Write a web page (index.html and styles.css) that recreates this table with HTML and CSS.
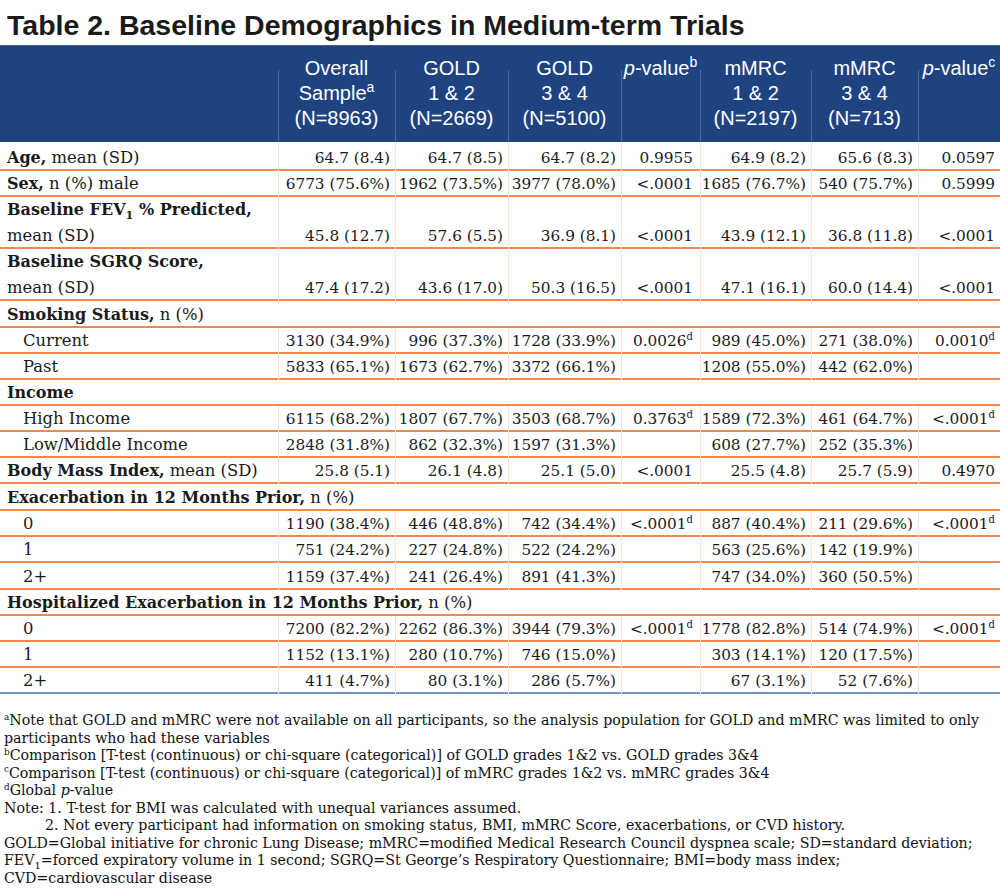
FILE: index.html
```html
<!DOCTYPE html>
<html lang="en">
<head>
<meta charset="utf-8">
<title>Table 2. Baseline Demographics in Medium-term Trials</title>
<link rel="stylesheet" href="styles.css">
</head>
<body>
<h1 class="title">Table 2. Baseline Demographics in Medium-term Trials</h1>
<table class="demo">
  <colgroup>
    <col class="c-label">
    <col class="c-overall">
    <col class="c-g12">
    <col class="c-g34">
    <col class="c-pb">
    <col class="c-m12">
    <col class="c-m34">
    <col class="c-pc">
  </colgroup>
  <thead>
    <tr>
      <th class="h-blank"></th>
      <th>Overall<br>Sample<sup>a</sup><br>(N=8963)</th>
      <th>GOLD<br>1 &amp; 2<br>(N=2669)</th>
      <th>GOLD<br>3 &amp; 4<br>(N=5100)</th>
      <th><i>p</i>-value<sup>b</sup></th>
      <th>mMRC<br>1 &amp; 2<br>(N=2197)</th>
      <th>mMRC<br>3 &amp; 4<br>(N=713)</th>
      <th><i>p</i>-value<sup>c</sup></th>
    </tr>
  </thead>
  <tbody>
    <tr class="first">
      <td class="lab"><b>Age,</b> mean (SD)</td>
      <td>64.7 (8.4)</td><td>64.7 (8.5)</td><td>64.7 (8.2)</td><td class="pb">0.9955</td><td>64.9 (8.2)</td><td>65.6 (8.3)</td><td class="pc">0.0597</td>
    </tr>
    <tr>
      <td class="lab"><b>Sex,</b> n (%) male</td>
      <td>6773 (75.6%)</td><td>1962 (73.5%)</td><td>3977 (78.0%)</td><td class="pb">&lt;.0001</td><td>1685 (76.7%)</td><td>540 (75.7%)</td><td class="pc">0.5999</td>
    </tr>
    <tr>
      <td class="lab"><b>Baseline FEV<sub>1</sub> % Predicted,</b><br>mean (SD)</td>
      <td>45.8 (12.7)</td><td>57.6 (5.5)</td><td>36.9 (8.1)</td><td class="pb">&lt;.0001</td><td>43.9 (12.1)</td><td>36.8 (11.8)</td><td class="pc">&lt;.0001</td>
    </tr>
    <tr>
      <td class="lab"><b>Baseline SGRQ Score,</b><br>mean (SD)</td>
      <td>47.4 (17.2)</td><td>43.6 (17.0)</td><td>50.3 (16.5)</td><td class="pb">&lt;.0001</td><td>47.1 (16.1)</td><td>60.0 (14.4)</td><td class="pc">&lt;.0001</td>
    </tr>
    <tr class="section tall">
      <td class="lab" colspan="8"><b>Smoking Status,</b> n (%)</td>
    </tr>
    <tr>
      <td class="lab sub">Current</td>
      <td>3130 (34.9%)</td><td>996 (37.3%)</td><td>1728 (33.9%)</td><td class="pb">0.0026<sup>d</sup></td><td>989 (45.0%)</td><td>271 (38.0%)</td><td class="pc">0.0010<sup>d</sup></td>
    </tr>
    <tr>
      <td class="lab sub">Past</td>
      <td>5833 (65.1%)</td><td>1673 (62.7%)</td><td>3372 (66.1%)</td><td class="pb"></td><td>1208 (55.0%)</td><td>442 (62.0%)</td><td class="pc"></td>
    </tr>
    <tr class="section">
      <td class="lab" colspan="8"><b>Income</b></td>
    </tr>
    <tr>
      <td class="lab sub">High Income</td>
      <td>6115 (68.2%)</td><td>1807 (67.7%)</td><td>3503 (68.7%)</td><td class="pb">0.3763<sup>d</sup></td><td>1589 (72.3%)</td><td>461 (64.7%)</td><td class="pc">&lt;.0001<sup>d</sup></td>
    </tr>
    <tr>
      <td class="lab sub">Low/Middle Income</td>
      <td>2848 (31.8%)</td><td>862 (32.3%)</td><td>1597 (31.3%)</td><td class="pb"></td><td>608 (27.7%)</td><td>252 (35.3%)</td><td class="pc"></td>
    </tr>
    <tr>
      <td class="lab"><b>Body Mass Index,</b> mean (SD)</td>
      <td>25.8 (5.1)</td><td>26.1 (4.8)</td><td>25.1 (5.0)</td><td class="pb">&lt;.0001</td><td>25.5 (4.8)</td><td>25.7 (5.9)</td><td class="pc">0.4970</td>
    </tr>
    <tr class="section tall">
      <td class="lab" colspan="8"><b>Exacerbation in 12 Months Prior,</b> n (%)</td>
    </tr>
    <tr>
      <td class="lab sub">0</td>
      <td>1190 (38.4%)</td><td>446 (48.8%)</td><td>742 (34.4%)</td><td class="pb">&lt;.0001<sup>d</sup></td><td>887 (40.4%)</td><td>211 (29.6%)</td><td class="pc">&lt;.0001<sup>d</sup></td>
    </tr>
    <tr>
      <td class="lab sub">1</td>
      <td>751 (24.2%)</td><td>227 (24.8%)</td><td>522 (24.2%)</td><td class="pb"></td><td>563 (25.6%)</td><td>142 (19.9%)</td><td class="pc"></td>
    </tr>
    <tr class="tall">
      <td class="lab sub">2+</td>
      <td>1159 (37.4%)</td><td>241 (26.4%)</td><td>891 (41.3%)</td><td class="pb"></td><td>747 (34.0%)</td><td>360 (50.5%)</td><td class="pc"></td>
    </tr>
    <tr class="section">
      <td class="lab" colspan="8"><b>Hospitalized Exacerbation in 12 Months Prior,</b> n (%)</td>
    </tr>
    <tr>
      <td class="lab sub">0</td>
      <td>7200 (82.2%)</td><td>2262 (86.3%)</td><td>3944 (79.3%)</td><td class="pb">&lt;.0001<sup>d</sup></td><td>1778 (82.8%)</td><td>514 (74.9%)</td><td class="pc">&lt;.0001<sup>d</sup></td>
    </tr>
    <tr>
      <td class="lab sub">1</td>
      <td>1152 (13.1%)</td><td>280 (10.7%)</td><td>746 (15.0%)</td><td class="pb"></td><td>303 (14.1%)</td><td>120 (17.5%)</td><td class="pc"></td>
    </tr>
    <tr class="last">
      <td class="lab sub">2+</td>
      <td>411 (4.7%)</td><td>80 (3.1%)</td><td>286 (5.7%)</td><td class="pb"></td><td>67 (3.1%)</td><td>52 (7.6%)</td><td class="pc"></td>
    </tr>
  </tbody>
</table>
<div class="notes">
  <div class="line"><sup>a</sup>Note that GOLD and mMRC were not available on all participants, so the analysis population for GOLD and mMRC was limited to only</div>
  <div class="line">participants who had these variables</div>
  <div class="line"><sup>b</sup>Comparison [T-test (continuous) or chi-square (categorical)] of GOLD grades 1&amp;2 vs. GOLD grades 3&amp;4</div>
  <div class="line"><sup>c</sup>Comparison [T-test (continuous) or chi-square (categorical)] of mMRC grades 1&amp;2 vs. mMRC grades 3&amp;4</div>
  <div class="line"><sup>d</sup>Global <i>p</i>-value</div>
  <div class="line">Note: 1. T-test for BMI was calculated with unequal variances assumed.</div>
  <div class="line indent">2. Not every participant had information on smoking status, BMI, mMRC Score, exacerbations, or CVD history.</div>
  <div class="line">GOLD=Global initiative for chronic Lung Disease; mMRC=modified Medical Research Council dyspnea scale; SD=standard deviation;</div>
  <div class="line">FEV<sub>1</sub>=forced expiratory volume in 1 second; SGRQ=St George’s Respiratory Questionnaire; BMI=body mass index;</div>
  <div class="line">CVD=cardiovascular disease</div>
</div>
</body>
</html>
```

FILE: styles.css
```css
html, body {
  margin: 0;
  padding: 0;
  background: #ffffff;
}

body {
  width: 1000px;
  font-family: "DejaVu Serif", "Liberation Serif", serif;
  color: #1a1a1a;
}

.title {
  margin: 0;
  padding: 6px 0 0 7px;
  height: 39px;
  line-height: 39px;
  font-family: "Liberation Sans", Arial, sans-serif;
  font-weight: bold;
  font-size: 28.5px;
  color: #1a1a1a;
  white-space: nowrap;
}

.demo {
  width: 1000px;
  table-layout: fixed;
  border-collapse: separate;
  border-spacing: 0;
}

.c-label { width: 278px; }
.c-overall { width: 117px; }
.c-g12 { width: 113px; }
.c-g34 { width: 113px; }
.c-pb { width: 79px; }
.c-m12 { width: 111px; }
.c-m34 { width: 107px; }
.c-pc { width: 82px; }

.demo thead th {
  height: 86px;
  padding: 10px 0 0 0;
  vertical-align: top;
  background-color: #1f4380;
  border-top: 1px solid #3d5f98;
  color: #ffffff;
  font-family: "Liberation Sans", Arial, sans-serif;
  font-weight: normal;
  font-size: 20px;
  line-height: 25px;
  text-align: center;
  white-space: nowrap;
  background-image: linear-gradient(#5d6395, #5d6395);
  background-repeat: no-repeat;
  background-position: 0 24px;
  background-size: 1px 100%;
}

.demo thead th.h-blank {
  background-image: none;
}

.demo sup {
  font-size: 0.66em;
  line-height: 0;
  vertical-align: baseline;
  position: relative;
  top: -0.55em;
}

.demo thead sup {
  font-size: 0.7em;
  top: -0.6em;
}

.demo tbody td {
  height: 26px;
  padding: 0 5px 0 0;
  font-size: 15.3px;
  line-height: 26px;
  text-align: right;
  vertical-align: bottom;
  white-space: nowrap;
  border-left: 1px solid #fde3d6;
  background-image: linear-gradient(#f5874e, #f5874e);
  background-repeat: no-repeat;
  background-position: 0 100%;
  background-size: 100% 2px;
}

.demo tbody td.lab {
  text-align: left;
  padding: 0 0 0 7px;
  border-left: none;
  font-size: 16.4px;
}

.demo tbody td.lab b {
  font-size: 16px;
}

.demo tbody td.sub {
  padding-left: 23px;
}

.demo tbody td.pb {
  padding-right: 7px;
}

.demo tbody tr.first td {
  height: 29px;
}

.demo tbody tr.tall td {
  height: 27px;
}

.demo tbody tr.last td {
  background-image: linear-gradient(#7393c6, #7393c6);
}

.demo tbody sub {
  font-size: 0.7em;
  line-height: 0;
}

.notes {
  padding: 18px 0 0 4px;
  font-size: 14.2px;
  line-height: 17.5px;
  color: #111111;
}

.notes .line {
  white-space: nowrap;
}

.notes .indent {
  padding-left: 41px;
}

.notes sup {
  font-size: 0.62em;
  line-height: 0;
  vertical-align: baseline;
  position: relative;
  top: -0.6em;
}

.notes sub {
  font-size: 0.7em;
  line-height: 0;
}
```
